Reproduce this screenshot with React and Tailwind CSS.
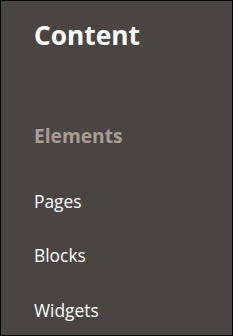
export default function App() {
  return (
    <div
      className="w-[233px] h-[336px] border border-black bg-[#4a4542] pl-[33px] pt-[17.5px]"
      style={{ fontFamily: '"Open Sans", "Noto Sans", sans-serif' }}
    >
      <h1 className="text-[26.3px] leading-[32px] font-bold text-white">Content</h1>
      <h2 className="mt-[73.3px] text-[19.2px] leading-[24px] font-bold text-[#a79d95]">Elements</h2>
      <ul className="mt-[41px] flex flex-col gap-[30.5px]">
        <li className="text-[17.4px] leading-[24px] font-medium text-white">Pages</li>
        <li className="text-[17.4px] leading-[24px] font-medium text-white">Blocks</li>
        <li className="text-[17.4px] leading-[24px] font-medium text-white">Widgets</li>
      </ul>
    </div>
  );
}
